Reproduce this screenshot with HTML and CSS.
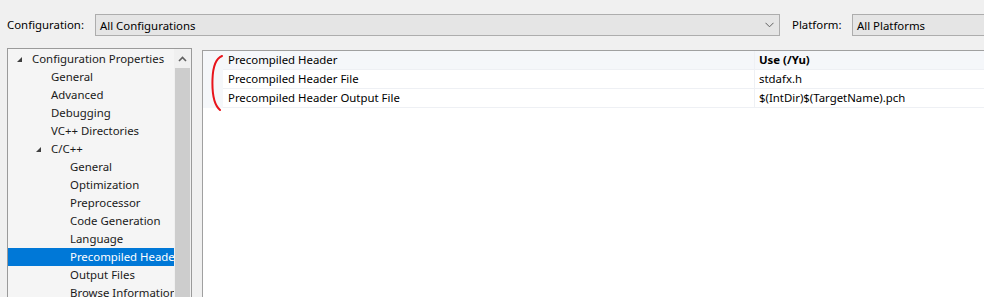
FILE: index.html
```html
<!DOCTYPE html>
<html>
<head>
<meta charset="utf-8">
<link rel="stylesheet" href="styles.css">
</head>
<body>
<div class="page">
  <div class="topbar">
    <span class="lbl lbl-config">Configuration:</span>
    <div class="combo combo-config">
      <span class="combo-text">All Configurations</span>
      <svg class="chev" width="9" height="6" viewBox="0 0 9 6"><polyline points="0.5,0.8 4.5,4.8 8.5,0.8" fill="none" stroke="#606060" stroke-width="1"/></svg>
    </div>
    <span class="lbl lbl-platform">Platform:</span>
    <div class="combo combo-platform">
      <span class="combo-text">All Platforms</span>
    </div>
  </div>
  <div class="main">
    <div class="tree">
      <div class="tree-items">
        <div class="row lv0"><span class="tri"></span>Configuration Properties</div>
        <div class="row lv1">General</div>
        <div class="row lv1">Advanced</div>
        <div class="row lv1">Debugging</div>
        <div class="row lv1">VC++ Directories</div>
        <div class="row lv1"><span class="tri"></span>C/C++</div>
        <div class="row lv2">General</div>
        <div class="row lv2">Optimization</div>
        <div class="row lv2">Preprocessor</div>
        <div class="row lv2">Code Generation</div>
        <div class="row lv2">Language</div>
        <div class="row lv2 sel">Precompiled Headers</div>
        <div class="row lv2">Output Files</div>
        <div class="row lv2">Browse Information</div>
      </div>
      <div class="vscroll">
        <div class="sb-btn">
          <svg width="9" height="6" viewBox="0 0 9 6"><polyline points="1,5 4.5,1.5 8,5" fill="none" stroke="#606060" stroke-width="1.6"/></svg>
        </div>
        <div class="sb-thumb"></div>
      </div>
    </div>
    <div class="grid">
      <div class="gutter"></div>
      <div class="props">
        <div class="prow first">
          <div class="pname">Precompiled Header</div>
          <div class="pval bold">Use (/Yu)</div>
        </div>
        <div class="prow">
          <div class="pname">Precompiled Header File</div>
          <div class="pval">stdafx.h</div>
        </div>
        <div class="prow">
          <div class="pname">Precompiled Header Output File</div>
          <div class="pval">$(IntDir)$(TargetName).pch</div>
        </div>
      </div>
      <svg class="mark" width="20" height="60" viewBox="0 0 20 60"><path d="M12 1 C7 3, 3 10, 2.5 24 C2 38, 4 50, 10 55" fill="none" stroke="#e8141c" stroke-width="2" stroke-linecap="round"/></svg>
    </div>
  </div>
</div>
</body>
</html>
```

FILE: styles.css
```css
html, body {
  margin: 0;
  padding: 0;
  background: #f0f0f0;
  overflow: hidden;
}
.page {
  width: 984px;
  height: 297px;
  overflow: hidden;
  font-family: "Noto Sans", "Liberation Sans", sans-serif;
  font-size: 11.4px;
  color: #000;
}
.topbar {
  display: flex;
  align-items: center;
  padding: 14px 0 0 7px;
  height: 22px;
}
.topbar > * {
  flex: none;
}
.lbl {
  line-height: 22px;
  white-space: nowrap;
}
.lbl-config {
  width: 88px;
}
.combo {
  box-sizing: border-box;
  height: 22px;
  border: 1px solid #adadad;
  background: #e5e5e5;
  display: flex;
  align-items: center;
  padding-left: 4px;
  white-space: nowrap;
}
.combo-config {
  width: 685px;
  justify-content: space-between;
  padding-right: 5px;
}
.chev {
  display: block;
}
.lbl-platform {
  margin-left: 12px;
  width: 60px;
}
.combo-platform {
  width: 200px;
}
.main {
  display: flex;
  align-items: flex-start;
  margin-top: 12px;
  padding-left: 7px;
}
.tree {
  box-sizing: border-box;
  width: 185px;
  height: 260px;
  border: 1px solid #9a9a9a;
  background: #f5f5f5;
  display: flex;
  flex: none;
}
.tree-items {
  width: 166px;
  padding-top: 1px;
  overflow: hidden;
  white-space: nowrap;
}
.row {
  height: 18px;
  line-height: 18px;
  position: relative;
  color: #1a1a1a;
}
.lv0 { padding-left: 24px; }
.lv1 { padding-left: 43px; }
.lv2 { padding-left: 62px; }
.row.sel {
  background: #0078d7;
  color: #fff;
}
.tri {
  position: absolute;
  top: 7px;
  width: 0;
  height: 0;
  border-left: 5px solid transparent;
  border-bottom: 5px solid #404040;
}
.lv0 .tri { left: 9px; }
.lv1 .tri { left: 28px; }
.vscroll {
  width: 17px;
  background: #f0f0f0;
  display: flex;
  flex-direction: column;
}
.sb-btn {
  height: 19px;
  display: flex;
  align-items: center;
  justify-content: center;
}
.sb-btn svg { display: block; }
.sb-thumb {
  flex: 1;
  margin: 0 1px;
  background: #cdcdcd;
}
.grid {
  position: relative;
  margin-left: 10px;
  margin-top: 2px;
  width: 800px;
  height: 260px;
  border-left: 1px solid #a0a0a0;
  border-top: 1px solid #a0a0a0;
  background: #fff;
  display: flex;
  flex: none;
}
.gutter {
  width: 20px;
  height: 57px;
  background: #f5f7fa;
}
.props {
  flex: 1;
}
.prow {
  display: flex;
  height: 18px;
  line-height: 18px;
  border-bottom: 1px solid #eef0f4;
}
.prow.first {
  background: #f5f7fa;
}
.pname {
  width: 526px;
  padding-left: 5px;
  border-right: 1px solid #eef0f4;
  white-space: nowrap;
}
.pval {
  padding-left: 4px;
  white-space: nowrap;
}
.bold { font-weight: bold; }
.mark {
  position: absolute;
  left: 7px;
  top: 4px;
}
```
